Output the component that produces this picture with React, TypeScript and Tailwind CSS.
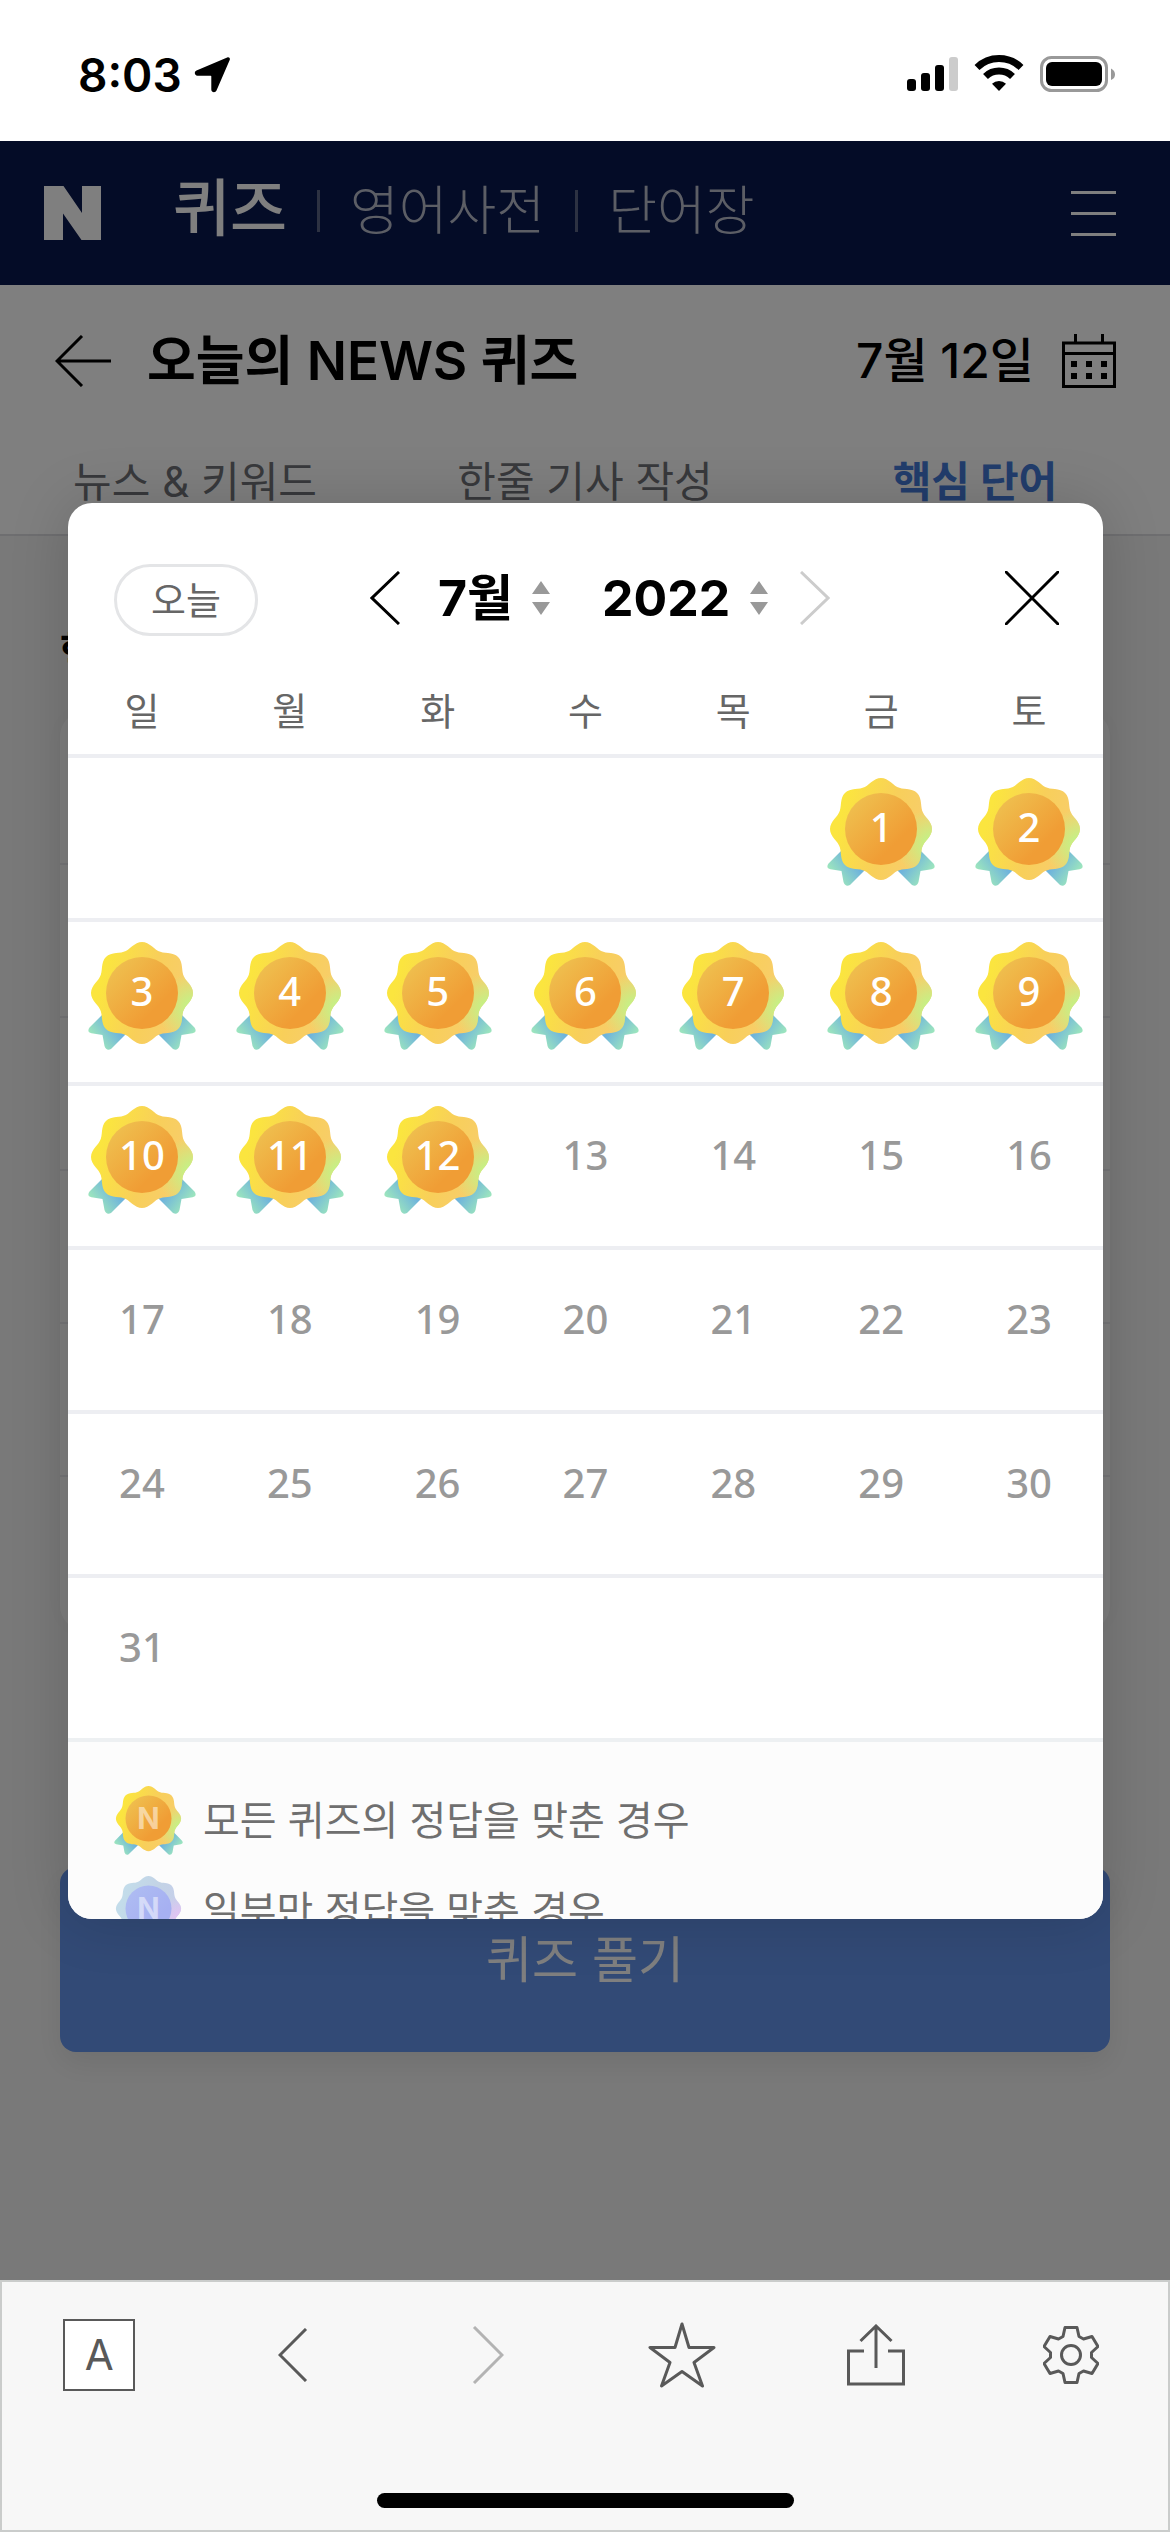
import { useId } from "react"
import clsx from "clsx"

const weekdays = ["일", "월", "화", "수", "목", "금", "토"]
const solvedUntil = 12

const weeks: (number | null)[][] = [
  [null, null, null, null, null, 1, 2],
  [3, 4, 5, 6, 7, 8, 9],
  [10, 11, 12, 13, 14, 15, 16],
  [17, 18, 19, 20, 21, 22, 23],
  [24, 25, 26, 27, 28, 29, 30],
  [31, null, null, null, null, null, null],
]

// eight soft lobes around the centre of the medal
const medalPath = (() => {
  const points: string[] = []
  for (let deg = 0; deg < 360; deg += 3) {
    const a = (deg * Math.PI) / 180
    const r = 48 + 3 * Math.cos(8 * a)
    points.push(`${(54 + r * Math.cos(a)).toFixed(2)} ${(51 + r * Math.sin(a)).toFixed(2)}`)
  }
  return `M${points.join("L")}Z`
})()

const medalColors = {
  gold: {
    ribbon: ["#6fb4dc", "#9de6bd"],
    petals: ["#fbe53f", "#f8cf5a", "#f8cd6c"],
    glow: "#c3f287",
    disc: ["#efc04f", "#f09d35"],
  },
  blue: {
    ribbon: ["#b9c9ee", "#cfe6ee"],
    petals: ["#c3dcea", "#c3d3e6", "#c6cfea"],
    glow: "#e3c3f3",
    disc: ["#aebcf2", "#a6b0f2"],
  },
}

type MedalProps = {
  tone?: "gold" | "blue"
  letter?: boolean
  className?: string
}

const Medal = ({ tone = "gold", letter = false, className }: MedalProps) => {
  const id = useId()
  const c = medalColors[tone]

  return (
    <svg viewBox="0 0 108 108" className={className} aria-hidden="true">
      <defs>
        <linearGradient id={`${id}-l`} x1="1" y1="0.1" x2="0.15" y2="0.7">
          <stop offset="0.4" stopColor={c.ribbon[0]} />
          <stop offset="1" stopColor={c.ribbon[1]} />
        </linearGradient>
        <linearGradient id={`${id}-r`} x1="0" y1="0.1" x2="0.85" y2="0.7">
          <stop offset="0.4" stopColor={c.ribbon[0]} />
          <stop offset="1" stopColor={c.ribbon[1]} />
        </linearGradient>
        <linearGradient id={`${id}-p`} x1="0" y1="0.35" x2="1" y2="0.65">
          <stop offset="0.1" stopColor={c.petals[0]} />
          <stop offset="0.55" stopColor={c.petals[1]} />
          <stop offset="0.9" stopColor={c.petals[2]} />
        </linearGradient>
        <radialGradient id={`${id}-g`} cx="1" cy="0.65" r="0.35">
          <stop offset="0.15" stopColor={c.glow} />
          <stop offset="1" stopColor={c.glow} stopOpacity="0" />
        </radialGradient>
        <linearGradient id={`${id}-d`} x1="0.1" y1="0.1" x2="0.9" y2="0.9">
          <stop offset="0" stopColor={c.disc[0]} />
          <stop offset="0.75" stopColor={c.disc[1]} />
        </linearGradient>
      </defs>
      <path
        d="M16 71L1.500 85.500Q-1.500 90 3.500 91.200L14.500 93L16.500 104Q18.500 109.500 23 107L39 91Z"
        fill={`url(#${id}-l)`}
      />
      <path
        d="M92 71L106.500 85.500Q109.500 90 104.500 91.200L93.500 93L91.500 104Q89.500 109.500 85 107L69 91Z"
        fill={`url(#${id}-r)`}
      />
      <path d={medalPath} fill={`url(#${id}-p)`} />
      <path d={medalPath} fill={`url(#${id}-g)`} />
      <circle cx="54" cy="51" r="36" fill={`url(#${id}-d)`} />
      {letter && (
        <text
          x="54"
          y="68"
          textAnchor="middle"
          fontSize="46"
          fontWeight="700"
          fill="#fff"
          fillOpacity="0.5"
          fontFamily="Inter, sans-serif"
        >
          N
        </text>
      )}
    </svg>
  )
}

const SortArrows = () => (
  <svg
    viewBox="0 0 18 34"
    className="absolute right-0 top-1/2 h-[34px] w-[18px] -translate-y-1/2 pointer-events-none"
    aria-hidden="true"
  >
    <path d="M9 0L18 13H0ZM9 34L0 21H18Z" fill="#999" />
  </svg>
)

const StatusBar = () => (
  <div className="flex h-[141px] shrink-0 items-center justify-between bg-white pl-[78px] pr-[55px] pt-2">
    <div className="flex items-center gap-3">
      <span className="text-[46px] font-semibold leading-[56px]">8:03</span>
      <svg viewBox="0 0 36 36" className="size-9" aria-hidden="true">
        <path
          d="M33.200 0.600C35 -0.200 36.400 1.200 35.700 3L22.500 33.500C21.300 36.200 17.300 35.500 17.300 32.500V19.300Q17.300 18.700 16.700 18.700H3.500C0.500 18.700 -0.200 14.700 2.500 13.500Z"
          fill="#000"
        />
      </svg>
    </div>
    <svg viewBox="0 0 208 42" className="h-[42px] w-[208px]" aria-hidden="true">
      <rect x="0" y="25" width="9" height="12" rx="3" />
      <rect x="14" y="19" width="9" height="18" rx="3" />
      <rect x="28" y="11" width="9" height="26" rx="3" />
      <rect x="42" y="3" width="9" height="34" rx="3" fill="#ccc" />
      <g fill="none" stroke="#000">
        <path d="M70 13.500A31.500 31.500 0 0 1 114 13.500" strokeWidth="7" />
        <path d="M78.500 22.500A19.500 19.500 0 0 1 105.500 22.500" strokeWidth="7" />
      </g>
      <path d="M92 37L85 29.800A10 10 0 0 1 99 29.800Z" />
      <rect x="134.500" y="3.500" width="65" height="33" rx="10" fill="none" stroke="#999" strokeWidth="3" />
      <rect x="139" y="8" width="56" height="24" rx="6" />
      <path d="M204 14.500Q208 16.500 208 20.500T204 26Z" fill="#999" />
    </svg>
  </div>
)

const Header = () => (
  <header className="flex h-36 items-center justify-between bg-[#09184e] pl-[44px] pr-[54px]">
    <div className="flex items-center">
      <a href="#naver" aria-label="N">
        <svg viewBox="0 0 57 54" className="h-[54px] w-[57px]" aria-hidden="true">
          <path d="M0 0H19.500L38 27V0H57V54H37.500L19 27.500V54H0Z" fill="#fff" />
        </svg>
      </a>
      <nav className="ml-[72px] flex items-center pb-1 text-[53px] font-light leading-[72px] text-[#b9bdcb]">
        <a href="#quiz" className="pb-1 text-[62px] font-medium text-white">퀴즈</a>
        <span className="mx-[30px] h-[42px] w-[3px] bg-[#5b6585]" />
        <a href="#dict">영어사전</a>
        <span className="mx-[30px] h-[42px] w-[3px] bg-[#5b6585]" />
        <a href="#words">단어장</a>
      </nav>
    </div>
    <button type="button" aria-label="메뉴" className="flex flex-col gap-[18px]">
      <span className="h-[3px] w-[45px] bg-white" />
      <span className="h-[3px] w-[45px] bg-white" />
      <span className="h-[3px] w-[45px] bg-white" />
    </button>
  </header>
)

const TitleBar = () => (
  <div className="flex h-[152px] items-center justify-between pl-[55px] pr-[54px]">
    <div className="flex items-center gap-9">
      <button type="button" aria-label="뒤로">
        <svg viewBox="0 0 56 52" className="h-[52px] w-[56px]" fill="none" stroke="#000" strokeWidth="3" aria-hidden="true">
          <path d="M56 26H2M27 1L2 26L27 51" />
        </svg>
      </button>
      <h1 className="text-[53px] font-semibold leading-[72px]">오늘의 NEWS 퀴즈</h1>
    </div>
    <button type="button" className="flex items-center gap-7 text-[48px] font-medium leading-[72px]">
      7월 12일
      <svg viewBox="0 0 54 54" className="size-[54px]" aria-hidden="true">
        <path d="M1.500 9H52.500V52.500H1.500ZM1.500 19.500H52.500M13.500 0V9M40.500 0V9" fill="none" stroke="#000" strokeWidth="3" />
        <path d="M9 27h6v6H9ZM24 27h6v6H24ZM39 27h6v6H39ZM9 39h6v6H9ZM24 39h6v6H24ZM39 39h6v6H39Z" />
      </svg>
    </button>
  </div>
)

const Tabs = () => (
  <nav className="grid h-[99px] grid-cols-3 items-center border-b-2 border-[#dcdde0] pb-2 text-center text-[42px] leading-[60px] text-[#707378]">
    <a href="#news">뉴스 &amp; 키워드</a>
    <a href="#article">한줄 기사 작성</a>
    <a href="#core" className="font-bold text-[#447ad8]">핵심 단어</a>
  </nav>
)

const WordPage = () => (
  <section className="flex-1 bg-[#f3f3f3] px-[60px] pt-[92px]">
    <h2 className="mb-9 text-[42px] font-bold leading-[48px]">핵심 단어</h2>
    <ul className="rounded-3xl bg-[#fcfcfd] shadow-[0_0_24px_rgba(0,0,0,0.04)]">
      {[0, 1, 2, 3, 4, 5].map((row) => (
        <li key={row} className="h-[153px] border-b-2 border-[#eaebee] last:border-b-0" />
      ))}
    </ul>
    <button
      type="button"
      className="mt-[237px] h-[185px] w-full rounded-2xl bg-[#6494ec] text-[50px] leading-[72px] text-white shadow-[0_12px_30px_rgba(0,0,0,0.08)]"
    >
      퀴즈 풀기
    </button>
  </section>
)

const CalendarHeader = () => (
  <div className="flex items-center pl-[46px] pr-[44px] pt-[61px]">
    <button
      type="button"
      className="h-[72px] w-36 rounded-full border-[3px] border-[#e4e5e7] text-[38px] leading-[54px] text-[#666]"
    >
      오늘
    </button>
    <div className="ml-28 flex items-center pb-1">
      <button type="button" aria-label="이전 달" className="mr-[38px]">
        <svg viewBox="0 0 30 54" className="h-[54px] w-[30px]" fill="none" stroke="#000" strokeWidth="3" aria-hidden="true">
          <path d="M29 1L2 27L29 53" />
        </svg>
      </button>
      <label className="relative mr-[52px] flex w-28 items-center">
        <select aria-label="월" defaultValue="7" className="w-full appearance-none bg-transparent text-[50px] font-bold leading-[60px]">
          <option value="6">6월</option>
          <option value="7">7월</option>
        </select>
        <SortArrows />
      </label>
      <label className="relative mr-8 flex w-[166px] items-center">
        <select aria-label="연도" defaultValue="2022" className="w-full appearance-none bg-transparent text-[50px] font-bold leading-[60px]">
          <option value="2021">2021</option>
          <option value="2022">2022</option>
        </select>
        <SortArrows />
      </label>
      <button type="button" aria-label="다음 달">
        <svg viewBox="0 0 30 54" className="h-[54px] w-[30px]" fill="none" stroke="#ccc" strokeWidth="3" aria-hidden="true">
          <path d="M1 1L28 27L1 53" />
        </svg>
      </button>
    </div>
    <button type="button" aria-label="닫기" className="ml-auto pb-1">
      <svg viewBox="0 0 54 54" className="size-[54px]" fill="none" stroke="#000" strokeWidth="3" aria-hidden="true">
        <path d="M0 0L54 54M54 0L0 54" />
      </svg>
    </button>
  </div>
)

const Day = ({ day }: { day: number }) => {
  const solved = day <= solvedUntil

  return (
    <button
      type="button"
      className={clsx(
        "relative mx-auto flex h-[108px] w-[108px] justify-center pt-[19px] font-['Noto_Sans'] text-[40px] font-medium leading-[60px]",
        solved ? "text-white" : "text-[#999]"
      )}
    >
      {solved && <Medal className="absolute inset-0 size-full" />}
      <span className="relative">{day}</span>
    </button>
  )
}

const CalendarTable = () => (
  <table className="w-full table-fixed border-separate border-spacing-0">
    <thead>
      <tr>
        {weekdays.map((name) => (
          <th key={name} scope="col" className="h-[118px] p-0 pt-8 text-[38px] font-normal leading-[54px] text-[#666]">
            {name}
          </th>
        ))}
      </tr>
    </thead>
    <tbody>
      {weeks.map((week, i) => (
        <tr key={i}>
          {week.map((day, j) => (
            <td key={j} className="h-[164px] border-t-4 border-[#edeef2] p-0 pt-5 align-top">
              {day && <Day day={day} />}
            </td>
          ))}
        </tr>
      ))}
    </tbody>
  </table>
)

const Legend = () => (
  <ul className="flex-1 border-t-4 border-[#edf0f2] bg-[#fcfcfc] pl-[46px] pt-11 text-[40px] leading-[60px] text-[#6f6f6f]">
    <li className="mb-[21px] flex h-[69px] items-center gap-5">
      <Medal letter className="size-[69px]" />
      모든 퀴즈의 정답을 맞춘 경우
    </li>
    <li className="flex h-[69px] items-center gap-5">
      <Medal letter tone="blue" className="size-[69px]" />
      일부만 정답을 맞춘 경우
    </li>
  </ul>
)

const CalendarModal = () => (
  <div className="absolute inset-0 flex bg-black/50 pb-[361px] pl-[68px] pr-[67px] pt-[362px]">
    <div
      role="dialog"
      aria-label="날짜 선택"
      className="flex min-w-0 flex-1 flex-col overflow-hidden rounded-3xl bg-white shadow-[0_0_60px_rgba(0,0,0,0.16)]"
    >
      <CalendarHeader />
      <CalendarTable />
      <Legend />
    </div>
  </div>
)

const Toolbar = () => (
  <footer className="flex h-[252px] shrink-0 flex-col border-2 border-[#cacccb] bg-[#f7f7f7] pt-[37px]">
    <nav className="grid grid-cols-6 text-[#595959]">
      <button type="button" className="mx-auto size-[72px] border-2 border-[#595959] bg-white text-[42px] leading-[60px]">
        A
      </button>
      <button type="button" aria-label="이전" className="flex h-[72px] items-center justify-center">
        <svg viewBox="0 0 30 54" className="h-[54px] w-[30px]" fill="none" stroke="currentColor" strokeWidth="3" aria-hidden="true">
          <path d="M28 1L2 27L28 53" />
        </svg>
      </button>
      <button type="button" aria-label="다음" className="flex h-[72px] items-center justify-center text-[#b3b3b3]">
        <svg viewBox="0 0 32 58" className="h-[58px] w-[32px]" fill="none" stroke="currentColor" strokeWidth="3" aria-hidden="true">
          <path d="M2 1L30 29L2 57" />
        </svg>
      </button>
      <button type="button" aria-label="즐겨찾기" className="flex h-[72px] items-center justify-center">
        <svg viewBox="0 0 68 66" className="h-[66px] w-[68px]" fill="none" stroke="currentColor" strokeWidth="3" strokeLinejoin="round" aria-hidden="true">
          <path d="M34 2L41 25.500H66L46 40.500L54.500 64L34 49.500L13.500 64L22 40.500L2 25.500H27Z" />
        </svg>
      </button>
      <button type="button" aria-label="공유" className="flex h-[72px] items-center justify-center">
        <svg viewBox="0 0 58 62" className="h-[62px] w-[58px]" fill="none" stroke="currentColor" strokeWidth="3" aria-hidden="true">
          <path d="M17 27H1.500V60H56.500V27H41M29 44V2M13.500 17L29 2L44.500 17" />
        </svg>
      </button>
      <button type="button" aria-label="설정" className="flex h-[72px] items-center justify-center">
        <svg viewBox="0 0 56 58" className="h-[58px] w-[56px]" fill="none" stroke="currentColor" strokeWidth="3" strokeLinejoin="round" aria-hidden="true">
          <path d="M22 1.500H34L36 10.500L40.500 13L49 10.500L55 20.500L48.500 26.500V31.500L55 37.500L49 47.500L40.500 45L36 47.500L34 56.500H22L20 47.500L15.500 45L7 47.500L1 37.500L7.500 31.500V26.500L1 20.500L7 10.500L15.500 13L20 10.500Z" />
          <circle cx="28" cy="29" r="9.500" />
        </svg>
      </button>
    </nav>
    <div className="mx-auto mb-[22px] mt-auto h-[15px] w-[417px] rounded-full bg-black" />
  </footer>
)

export default function App() {
  return (
    <div className="flex min-h-screen flex-col bg-white font-['Inter','Noto_Sans_CJK_KR',sans-serif] text-black">
      <StatusBar />
      <main className="relative flex flex-1 flex-col overflow-hidden">
        <Header />
        <TitleBar />
        <Tabs />
        <WordPage />
        <CalendarModal />
      </main>
      <Toolbar />
    </div>
  )
}
